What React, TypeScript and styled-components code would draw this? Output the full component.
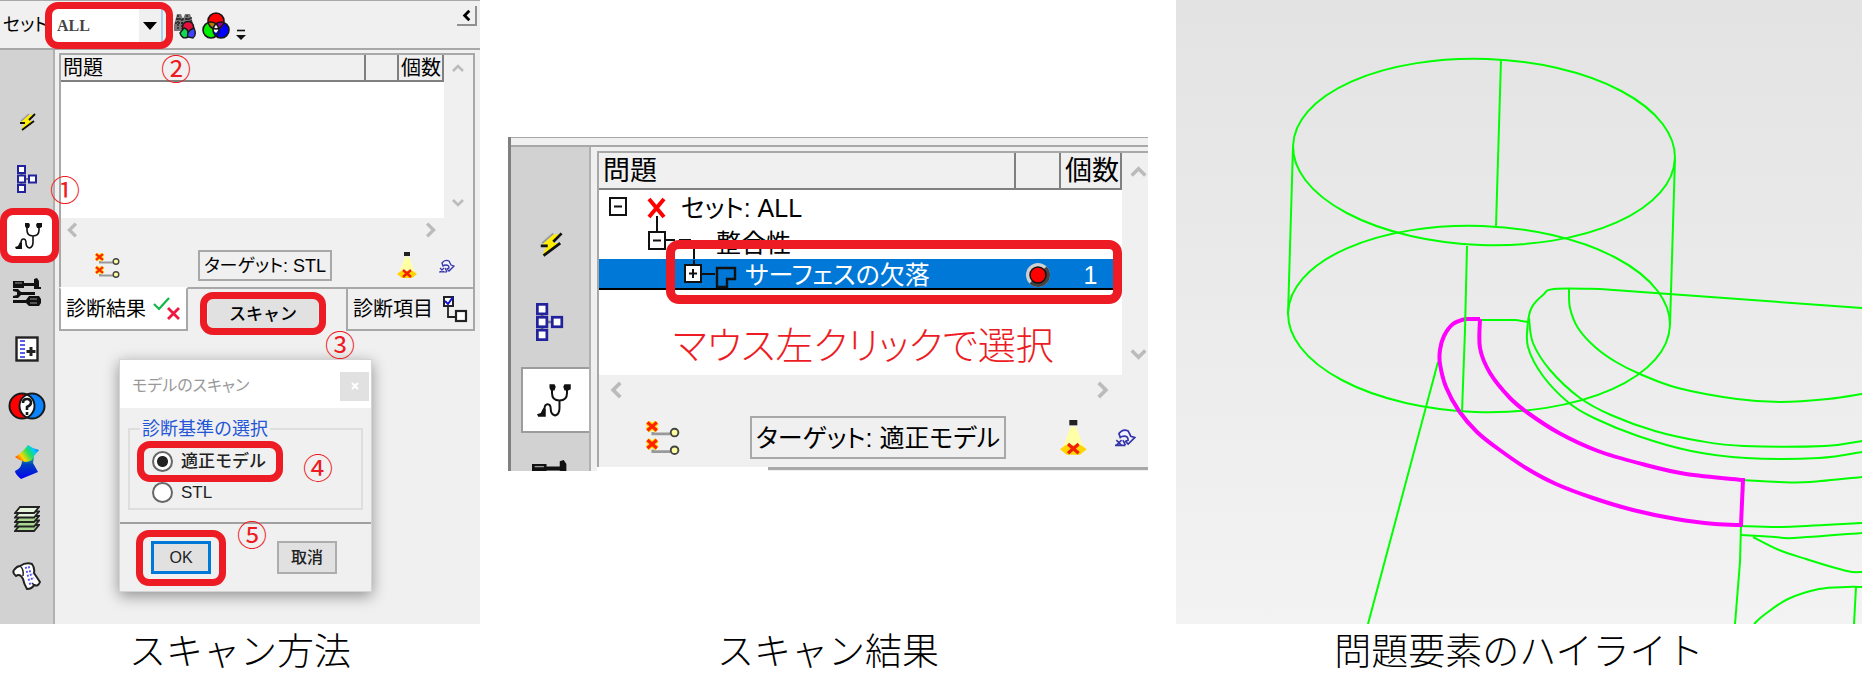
import React from "react";
import styled, { createGlobalStyle } from "styled-components";

const RED = "#ed1c24";
const FACE = "#f0f0f0";
const EDGE = "#a8a8a8";
const GREEN = "#00ff00";

const Global = createGlobalStyle`
  *, *::before, *::after { box-sizing: border-box; }
  body {
    margin: 0;
    background: #fff;
    color: #000;
    font-family: "Liberation Sans", "Noto Sans CJK JP", sans-serif;
    font-feature-settings: "palt";
  }
  button, select, input, table { font: inherit; color: inherit; font-feature-settings: inherit; }
`;

/* ---------- page ---------- */

const Page = styled.main`
  display: grid;
  grid-template-columns: 480fr 640fr 686fr;
  column-gap: 28px;
  padding-bottom: 24px;
`;

const Figure = styled.figure`
  margin: 0;
  min-width: 0;
  display: flex;
  flex-direction: column;
`;

const Stage = styled.div<{ $top?: number }>`
  min-height: 624px;
  padding-top: ${(p) => p.$top ?? 0}px;
  display: flex;
  flex-direction: column;
`;

const Caption = styled.figcaption`
  font: 300 37px/50px "Noto Sans CJK JP", sans-serif;
  text-align: center;
  white-space: nowrap;
`;

/* ---------- annotations ---------- */

const Mark = styled.span<{ $t: number; $r: number; $b: number; $l: number; $w?: number }>`
  position: absolute;
  inset: ${(p) => `${p.$t}px ${p.$r}px ${p.$b}px ${p.$l}px`};
  border: ${(p) => p.$w ?? 7}px solid ${RED};
  border-radius: 13px;
  pointer-events: none;
  z-index: 2;
`;

const Step = styled.span<{ $x: number; $y: number }>`
  position: absolute;
  left: ${(p) => p.$x}px;
  top: ${(p) => p.$y}px;
  width: 32px;
  color: ${RED};
  font: 400 30px/32px "Noto Sans CJK JP", sans-serif;
  text-align: center;
  z-index: 3;
`;

const Note = styled.p`
  margin: 0;
  padding: 25px 0 0 74px;
  color: ${RED};
  font: 300 38px/56px "Noto Sans CJK JP", sans-serif;
  font-feature-settings: "palt";
  white-space: nowrap;
`;

/* ---------- application window ---------- */

const Window = styled.section<{ $clip?: boolean }>`
  position: relative;
  flex: ${(p) => (p.$clip ? "none" : "1")};
  height: ${(p) => (p.$clip ? "334px" : "auto")};
  overflow: ${(p) => (p.$clip ? "hidden" : "visible")};
  border-left: ${(p) => (p.$clip ? "3px solid #808080" : "0")};
  display: flex;
  flex-direction: column;
  background: ${FACE};
`;

const Toolbar = styled.div<{ $h: number }>`
  flex: none;
  height: ${(p) => p.$h}px;
  display: flex;
  align-items: flex-start;
  padding: 0 3px;
  border-top: 1px solid ${EDGE};
  border-bottom: 2px solid ${EDGE};
`;

const SetLabel = styled.label`
  width: 48px;
  padding-top: 9px;
  font-size: 18px;
  line-height: 30px;
  white-space: nowrap;
`;

const SelectBox = styled.span`
  position: relative;
  width: 112px;
  margin-top: 8px;
  background: #fff;
  border-right: 2px solid #a9d3f2;
  svg { position: absolute; right: 0; top: 0; pointer-events: none; }
`;

const Select = styled.select`
  appearance: none;
  width: 100%;
  height: 34px;
  padding: 0 6px;
  border: 0;
  background: none;
  color: #444;
  font: 700 16px/34px "Liberation Serif", serif;
`;

const IconButton = styled.button<{ $m?: string }>`
  display: grid;
  place-items: center;
  margin: ${(p) => p.$m ?? "0"};
  padding: 0;
  border: 0;
  background: none;
`;

const Collapse = styled(IconButton)`
  width: 20px;
  height: 20px;
  margin: 5px 0 0 auto;
  border-right: 2px solid #909090;
  border-bottom: 2px solid #909090;
`;

const Body = styled.div`
  flex: 1;
  min-height: 0;
  display: flex;
`;

const Sidebar = styled.nav<{ $big?: boolean }>`
  flex: none;
  width: ${(p) => (p.$big ? 80 : 55)}px;
  padding: ${(p) => (p.$big ? "58px 0 0" : "44px 0 20px")};
  display: flex;
  flex-direction: column;
  background: #d2d2d2;
  border-right: 2px solid #b0b0b0;
`;

const SideItem = styled.button<{ $big?: boolean }>`
  position: relative;
  flex: ${(p) => (p.$big ? "none" : "1")};
  height: ${(p) => (p.$big ? "78px" : "auto")};
  padding: 0;
  border: 0;
  background: none;
  display: grid;
  place-items: center;
`;

const ActiveTab = styled.span<{ $big?: boolean }>`
  position: relative;
  display: grid;
  place-items: center;
  justify-self: end;
  width: ${(p) => (p.$big ? 68 : 46)}px;
  height: ${(p) => (p.$big ? 66 : 44)}px;
  padding-right: 3px;
  background: #fff;
  border: ${(p) => (p.$big ? "2px solid #9c9c9c" : "0")};
  border-right: 0;
`;

const Content = styled.div<{ $big?: boolean }>`
  flex: 1;
  min-width: 0;
  padding: ${(p) => (p.$big ? "4px 0 0 6px" : "3px 5px 0 4px")};
`;

const Panel = styled.div<{ $big?: boolean }>`
  border: 2px solid ${EDGE};
  border-bottom: 0;
  ${(p) => p.$big && "border-right: 0;"}
`;

const Scroller = styled.div<{ $bar: number }>`
  display: grid;
  grid-template-columns: 1fr ${(p) => p.$bar}px;
`;

const ListArea = styled.div<{ $h: number }>`
  height: ${(p) => p.$h}px;
  background: #fff;
`;

const VBar = styled.div<{ $big?: boolean }>`
  display: flex;
  flex-direction: column;
  justify-content: space-between;
  padding: ${(p) => (p.$big ? "9px 0 11px 6px" : "6px 2px 8px 0")};
`;

const HBar = styled.div<{ $big?: boolean }>`
  display: flex;
  justify-content: space-between;
  padding: ${(p) => (p.$big ? "5px 35px 3px 7px" : "3px 33px 3px 2px")};
`;

const Table = styled.table`
  width: 100%;
  border-collapse: collapse;
  table-layout: fixed;
`;

const Th = styled.th<{ $big?: boolean; $w?: number }>`
  width: ${(p) => (p.$w ? `${p.$w}px` : "auto")};
  height: ${(p) => (p.$big ? 36 : 26)}px;
  padding: 0 0 0 ${(p) => (p.$big ? 4 : 2)}px;
  background: ${FACE};
  border-right: 2px solid #808080;
  border-bottom: 2px solid #808080;
  font-size: ${(p) => (p.$big ? 27 : 20)}px;
  line-height: ${(p) => (p.$big ? 32 : 24)}px;
  font-weight: 400;
  text-align: left;
  white-space: nowrap;
`;

const Row = styled.tr<{ $h: number; $on?: boolean }>`
  position: relative;
  height: ${(p) => p.$h}px;
  background: ${(p) => (p.$on ? "#0078d7" : "none")};
  color: ${(p) => (p.$on ? "#fff" : "#000")};
  ${(p) => p.$on && "box-shadow: inset 0 -2px #000;"}
  td { padding: 0; text-align: center; font-size: 25px; line-height: 30px; }
  td svg { display: block; margin: auto; }
`;

const TreeCell = styled.span`
  display: flex;
  align-items: center;
  white-space: nowrap;
  && svg { flex: none; margin: 0; }
`;

const Actions = styled.div<{ $big?: boolean }>`
  height: ${(p) => (p.$big ? 64 : 45)}px;
  display: flex;
  align-items: center;
  padding: ${(p) => (p.$big ? "5px 12px 0 47px" : "2px 18px 0 34px")};
`;

const Target = styled.button<{ $big?: boolean }>`
  height: ${(p) => (p.$big ? 43 : 31)}px;
  width: ${(p) => (p.$big ? 256 : 134)}px;
  margin: ${(p) => (p.$big ? "0 auto 0 70px" : "0 auto 0 78px")};
  padding: 0;
  background: none;
  border: 2px solid ${EDGE};
  font-size: ${(p) => (p.$big ? 25 : 18)}px;
  line-height: 24px;
  white-space: nowrap;
`;

const Tabs = styled.div`
  display: grid;
  grid-template-columns: 129px 1fr 129px;
  height: 39px;
`;

const Tab = styled.button<{ $on?: boolean }>`
  display: flex;
  align-items: center;
  justify-content: space-between;
  padding: 0 5px;
  background: ${(p) => (p.$on ? "#fff" : FACE)};
  border: 2px solid ${EDGE};
  ${(p) => p.$on && "border-top-color: #fff;"}
  font-size: 20px;
  line-height: 28px;
  white-space: nowrap;
`;

const TabGap = styled.div`
  border-top: 2px solid ${EDGE};
  padding: 10px 28px 0 20px;
`;

const ScanButton = styled.button`
  position: relative;
  width: 100%;
  height: 32px;
  padding: 0;
  border: 0;
  background: #e1e1e1;
  font-size: 17px;
  line-height: 32px;
  font-weight: 500;
  font-feature-settings: normal;
`;

const CutTabsBack = styled.div`
  background: #fff;
`;

const CutTabs = styled.div`
  margin-left: 171px;
  height: 12px;
  border-top: 3px solid ${EDGE};
  background: ${FACE};
`;

/* ---------- scan dialog ---------- */

const Dialog = styled.section`
  position: absolute;
  left: 119px;
  top: 359px;
  width: 253px;
  background: ${FACE};
  border: 1px solid #d4d4d4;
  box-shadow: 0 4px 14px rgba(0, 0, 0, 0.4);
`;

const TitleBar = styled.header`
  height: 48px;
  display: flex;
  justify-content: space-between;
  align-items: center;
  padding: 0 2px 0 12px;
  background: #fff;
  color: #999;
  font-size: 16px;
`;

const Close = styled(IconButton)`
  width: 29px;
  height: 29px;
  margin-top: 4px;
  background: #e1e1e1;
`;

const Group = styled.fieldset`
  height: 92px;
  margin: 10px 8px 12px;
  padding: 6px 0 0 22px;
  border: 2px solid #dedede;
  legend {
    margin-left: -12px;
    padding: 0 2px;
    color: #2456d6;
    font-size: 18px;
    line-height: 22px;
    font-feature-settings: normal;
  }
`;

const Choice = styled.label`
  position: relative;
  display: flex;
  align-items: center;
  gap: 8px;
  width: max-content;
  height: 31px;
  font-size: 17px;
  line-height: 24px;
  font-weight: 500;
  color: #222;
  font-feature-settings: normal;
`;

const Radio = styled.input`
  appearance: none;
  width: 21px;
  height: 21px;
  margin: 0;
  border: 2px solid #666;
  border-radius: 50%;
  background: #fff;
  &:checked { background: radial-gradient(circle, #222 5px, #fff 6px); }
`;

const Buttons = styled.footer`
  height: 69px;
  display: flex;
  justify-content: space-between;
  padding: 17px 34px 0 31px;
  border-top: 2px solid #a0a0a0;
`;

const DialogButton = styled.button<{ $primary?: boolean }>`
  position: relative;
  width: 60px;
  height: 33px;
  padding: 0;
  background: #e1e1e1;
  border: ${(p) => (p.$primary ? "3px solid #0078d7" : "2px solid #adadad")};
  color: #222;
  font-size: 16px;
  font-weight: 500;
  line-height: 26px;
`;

const Drawing = styled.svg`
  display: block;
  width: 100%;
  height: 624px;
`;

/* ---------- icons ---------- */

type Sized = { s?: number };

const Chevron = ({ d, s = 14, c = "#bbb", w = 2.6 }: { d: "up" | "down" | "left" | "right"; s?: number; c?: string; w?: number }) => {
  const paths = { up: "M2 10L7 5L12 10", down: "M2 4L7 9L12 4", left: "M10 2L5 7L10 12", right: "M4 2L9 7L4 12" };
  return (
    <svg width={s} height={s} viewBox="0 0 14 14">
      <path d={paths[d]} fill="none" stroke={c} strokeWidth={w} />
    </svg>
  );
};

const Bolt = ({ s = 18 }: Sized) => (
  <svg width={s} height={s} viewBox="0 0 18 18">
    <path d="M11 2L3 9h4L3 17 16 8h-5l6-7z" fill="#ffee00" />
    <path d="M11 1L3 8" stroke="#999" strokeWidth="1.4" />
    <path d="M17 1L11 7M2 10h5M16 8L4 17" stroke="#111" strokeWidth="2" fill="none" />
  </svg>
);

const Nodes = ({ s = 28 }: Sized) => (
  <svg width={(s * 20) / 28} height={s} viewBox="0 0 20 28">
    <g fill="#fff" stroke="#22229c" strokeWidth="2">
      <path d="M4.500 8v12M8 14h4" stroke="#777" />
      <rect x="1" y="1" width="7" height="7" />
      <rect x="1" y="10.500" width="7" height="7" />
      <rect x="1" y="20" width="7" height="7" />
      <rect x="12" y="10.500" width="7" height="7" />
    </g>
  </svg>
);

const Stethoscope = ({ s = 28 }: Sized) => (
  <svg width={s} height={s} viewBox="0 0 28 28">
    <path d="M12 4v4q0 6 6 6t6-6V4M18 14v6q0 5-3.500 6Q11 25 11 21q0-4-2.500-4T6 21l-2 4" fill="none" stroke="#111" strokeWidth="1.600" />
    <path d="M10 1h4l1 2-1 3h-3L10 4zM22 1h5v4l-2 1h-3l-1-3zM5 20l2 1v6H1l-1-2 3-1z" fill="#111" />
  </svg>
);

const Tools = ({ s = 28 }: Sized) => (
  <svg width={s} height={s} viewBox="0 0 28 28">
    <path d="M0 3h11v2h10V1l3-1 2 3v6h2v2h-7V8H11v2H0z" fill="#111" />
    <path d="M2 5h7" stroke="#999" />
    <path d="M0 11h5l3 3h14v3H8l-3 3H0v-2l4-1v-3l-4-1z" fill="#111" />
    <path d="M0 22h13l3-4h10l2 3v4l-2 3H16l-3-3H0z" fill="#111" />
    <path d="M17 21h7M17 25h7" stroke="#999" />
  </svg>
);

const DocPlus = () => (
  <svg width="24" height="26" viewBox="0 0 24 26">
    <rect x="1.500" y="1.500" width="21" height="23" fill="#fff" stroke="#222" strokeWidth="2.400" />
    <path d="M5 5h5M5 9h5M5 13h5M5 17h5M5 21h5" stroke="#5a5aee" strokeWidth="2" />
    <path d="M16 11v9M11.500 15.500h9" stroke="#222" strokeWidth="3" />
  </svg>
);

const Venn = () => (
  <svg width="38" height="28" viewBox="0 0 38 28">
    <circle cx="14" cy="14" r="12.500" fill="#fe0000" />
    <circle cx="24" cy="14" r="12.500" fill="#0a84ff" />
    <path d="M19 2.700a12.500 12.500 0 0 1 0 22.600 12.500 12.500 0 0 1 0-22.600z" fill="#fff" />
    <g fill="none" stroke="#181818" strokeWidth="2">
      <circle cx="14" cy="14" r="12.500" />
      <circle cx="24" cy="14" r="12.500" />
      <path d="M15 11q0-4 4-4t4 4q0 2-4 4v3M19 20v3" strokeWidth="2.600" />
    </g>
  </svg>
);

const Ribbon = () => (
  <svg width="24" height="34" viewBox="0 0 24 34">
    <defs>
      <linearGradient id="rainbow" x1="0" y1="0.700" x2="1" y2="0.200">
        <stop offset="0" stopColor="#ff4a00" />
        <stop offset="0.250" stopColor="#ffd800" />
        <stop offset="0.550" stopColor="#22e060" />
        <stop offset="0.800" stopColor="#00c8ff" />
        <stop offset="1" stopColor="#0050ff" />
      </linearGradient>
      <linearGradient id="deep" x1="0" y1="0" x2="0" y2="1">
        <stop offset="0" stopColor="#20b080" />
        <stop offset="0.350" stopColor="#0040c0" />
        <stop offset="1" stopColor="#0000f0" />
      </linearGradient>
    </defs>
    <path d="M7 16l12-4-1 6 5 9-17 7q-6-5-6-8 7-3 7-10z" fill="url(#deep)" />
    <path d="M0 12Q7 8 13 0q5 4 11 5-4 4-7 10-3 2-7 2-5-1-10-5z" fill="url(#rainbow)" />
  </svg>
);

const Layers = () => (
  <svg width="26" height="28" viewBox="0 0 26 28">
    {[20, 15.5, 11, 6.5, 2].map((y, i) => (
      <path key={y} d={`M1 ${y + 6}L6 ${y}H25L20 ${y + 6}z`} fill={i > 2 ? "#e4f4da" : "#a8d890"} stroke="#222" strokeWidth="1.800" />
    ))}
  </svg>
);

const Scroll = () => (
  <svg width="30" height="28" viewBox="0 0 30 28">
    <path d="M8 4Q14 0 20 2q3 4 2 9l6 9q-2 5-6 3-2 4-7 4-3-5-4-10-3-6-7-3-4-3-2-6 3-4 6-4z" fill="#fff" stroke="#222" strokeWidth="2" />
    <path d="M8 4q4 3 3 10M22 23l-2-2" fill="none" stroke="#222" strokeWidth="1.500" />
    <path d="M13 6l5-1M14 10l5-1M15 14l6-2M16 18l6-2M17 22l3-1" stroke="#5c5cf2" strokeWidth="2" strokeDasharray="2 1" />
  </svg>
);

const Spheres = () => (
  <svg width="28" height="28" viewBox="0 0 28 28">
    <circle cx="14" cy="9" r="8" fill="#fe0000" />
    <circle cx="9" cy="18" r="8" fill="#00f000" />
    <circle cx="19" cy="18" r="8" fill="#0000ff" />
    <path d="M14 12q4 2 4 4l-4 5q-4-3-4-6z" fill="#fff" />
    <path d="M6.500 10.500Q10 9 14 12q-4 2-5 5-3-3-2.500-6.500z" fill="#c07a00" />
    <path d="M21.500 10.500Q18 9 14 12q4 2 5 5 3-3 2.500-6.500z" fill="#900090" />
    <g fill="none" stroke="#181818" strokeWidth="1.600">
      <circle cx="14" cy="9" r="8" />
      <circle cx="9" cy="18" r="8" />
      <circle cx="19" cy="18" r="8" />
    </g>
  </svg>
);

const Binoculars = () => (
  <svg width="22" height="26" viewBox="0 0 22 26">
    <path d="M0 12L3 1h4l2 5 2-5h5l3 9v8H0z" fill="#777" />
    <path d="M1 10h17M2 6h15M4 2v14M8 6v10M13 2v14M17 4v12" stroke="#222" strokeWidth="1.400" strokeDasharray="2 1" />
    <circle cx="14" cy="14" r="5.500" fill="#e0103a" stroke="#181818" strokeWidth="1.400" />
    <path d="M6 20l4-5q6 2 4 9-6 3-8-4z" fill="#10d850" stroke="#181818" strokeWidth="1.400" />
    <path d="M14 24q-2-6 6-9 3 7-1 10z" fill="#4040ff" stroke="#181818" strokeWidth="1.400" />
  </svg>
);

const More = () => (
  <svg width="10" height="12" viewBox="0 0 10 12">
    <path d="M1 1.500h8" stroke="#111" strokeWidth="1.600" />
    <path d="M0 6h10L5 11z" fill="#111" />
  </svg>
);

const BrokenLinks = ({ s = 25 }: Sized) => (
  <svg width={s} height={s} viewBox="0 0 25 25">
    {[0, 13].map((y) => (
      <g key={y}>
        <path d={`M5 ${y + 8}v1.500h13`} fill="none" stroke="#999" strokeWidth="2" />
        <path d={`M1 ${y + 1}l7 6M8 ${y + 1}l-7 6`} stroke="#ffd800" strokeWidth="4" />
        <path d={`M1 ${y + 1}l7 6M8 ${y + 1}l-7 6`} stroke="#ff2200" strokeWidth="2.300" />
        <circle cx="21" cy={y + 8.5} r="2.800" fill="#ffffa0" stroke="#444" strokeWidth="1.400" />
      </g>
    ))}
  </svg>
);

const Lamp = ({ s = 27 }: Sized) => (
  <svg width={(s * 20) / 27} height={s} viewBox="0 0 20 27">
    <rect x="7" y="0" width="6" height="4" fill="#222" />
    <path d="M8 5h4l6 16H2z" fill="#ffffa6" />
    <path d="M0 22l4-3h12l4 3-5 4H5z" fill="#ffd400" />
    <path d="M6 18l8 7M14 18l-8 7" stroke="#f02000" strokeWidth="2.400" />
  </svg>
);

const Turn = ({ s = 16 }: Sized) => (
  <svg width={s} height={s} viewBox="0 0 16 16">
    <path d="M3 5q3-4 7-2l2 4 3 1-5 5-2-2 2-1q0-3-3-3-2 0-3 1z" fill="#f4f4ff" stroke="#3434ac" strokeWidth="1.300" />
    <path d="M1 10l4 4M5 10l-4 4M6 10l2 4M0 14h8" stroke="#3434ac" strokeWidth="1.200" />
  </svg>
);

const CheckCross = () => (
  <svg width="28" height="26" viewBox="0 0 28 26">
    <path d="M1 8l5 5L16 2" fill="none" stroke="#10b848" strokeWidth="2.200" />
    <path d="M15 12l11 11M26 12L15 23" stroke="#ee1840" strokeWidth="2.800" />
  </svg>
);

const CheckTree = () => (
  <svg width="26" height="28" viewBox="0 0 26 28">
    <path d="M6 10v12h8" fill="none" stroke="#222" strokeWidth="1.800" />
    <rect x="2" y="2" width="9" height="9" fill="#fff" stroke="#222" strokeWidth="2" />
    <path d="M3 6l3 3 5-7" fill="none" stroke="#1010d0" strokeWidth="2" />
    <rect x="14" y="16" width="10" height="10" fill="#fff" stroke="#222" strokeWidth="2.200" />
  </svg>
);

const Led = () => (
  <svg width="26" height="26" viewBox="0 0 26 26">
    <circle cx="13" cy="13" r="12" fill="#d0d0d0" />
    <path d="M21.500 4.500a12 12 0 0 1-17 17z" fill="#444" />
    <circle cx="13" cy="13" r="8" fill="#fe0000" stroke="#111" strokeWidth="1.500" />
  </svg>
);

const RootGlyph = () => (
  <svg width="82" height="36" viewBox="0 0 82 36">
    <rect x="11" y="8" width="16" height="17" fill="#fff" stroke="#111" strokeWidth="2" />
    <path d="M15 16.500h8M58 26v10" stroke="#111" strokeWidth="2" />
    <path d="M50 9l15 18M65 9L50 27" stroke="#fe0000" strokeWidth="4" />
  </svg>
);

const BranchGlyph = () => (
  <svg width="117" height="33" viewBox="0 0 117 33">
    <path d="M58 0v6M67 14h9M80 14h12M95 20v13" stroke="#111" strokeWidth="2" />
    <rect x="50" y="6" width="16" height="17" fill="#fff" stroke="#111" strokeWidth="2" />
    <path d="M54 14.500h8" stroke="#111" strokeWidth="2" />
  </svg>
);

const LeafGlyph = () => (
  <svg width="146" height="30" viewBox="0 0 146 30">
    <path d="M95 0v6M103 14h13" stroke="#111" strokeWidth="2" />
    <rect x="86" y="5" width="16" height="17" fill="#fff" stroke="#111" strokeWidth="2" />
    <path d="M90 13.500h8M94 9v9" stroke="#111" strokeWidth="2" />
    <path d="M118 8h18v11h-8v8h-10z" fill="none" stroke="#111" strokeWidth="2.400" />
  </svg>
);

/* ---------- wireframe ---------- */

type Pt = [number, number];

/** Smooth path through the given points (Catmull-Rom to cubic segments). */
const smooth = (pts: Pt[]) =>
  pts.slice(1).reduce((d, p, k) => {
    const a = pts[Math.max(k - 1, 0)];
    const b = pts[k];
    const c = pts[Math.min(k + 2, pts.length - 1)];
    const c1 = [b[0] + (p[0] - a[0]) / 6, b[1] + (p[1] - a[1]) / 6];
    const c2 = [p[0] - (c[0] - b[0]) / 6, p[1] - (c[1] - b[1]) / 6];
    return `${d}C${c1.join(" ")} ${c2.join(" ")} ${p.join(" ")}`;
  }, `M${pts[0].join(" ")}`);

const edges: Pt[][] = [
  [[424, 289], [378, 289], [367, 295], [356, 307], [352, 322], [352, 347], [367, 376], [393, 403], [418, 418], [462, 436], [515, 451], [570, 458], [643, 458], [686, 452]],
  [[353, 318], [357, 343], [374, 370], [404, 398], [435, 415], [479, 431], [524, 441], [568, 446], [649, 446], [686, 441]],
  [[393, 289], [394, 308], [402, 328], [419, 347], [440, 362], [464, 374], [502, 388], [561, 399], [605, 402], [652, 399], [686, 394]],
  [[567, 480], [603, 482], [634, 482], [686, 477]],
  [[565, 526], [607, 527], [667, 524], [686, 523]],
  [[565, 535], [599, 537], [618, 538], [686, 533]],
  [[577, 537], [603, 550], [630, 559], [671, 571], [686, 572]],
  [[578, 624], [588, 615], [612, 599], [643, 589], [671, 587], [686, 587]],
];

const faceInner: Pt[] = [[304, 319], [304, 348], [314, 373], [334, 398], [352, 413], [383, 433], [422, 451], [466, 464], [510, 474], [567, 480]];
const faceOuter: Pt[] = [[565, 525], [539, 524], [500, 519], [457, 510], [417, 498], [380, 484], [350, 468], [321, 448], [301, 432], [283, 411], [270, 387], [264, 364], [264, 350], [268, 336], [277, 324], [289, 319]];

const Wireframe = () => (
  <Drawing viewBox="0 0 686 624" preserveAspectRatio="xMinYMin slice" role="img" aria-label="問題要素のハイライト">
    <defs>
      <linearGradient id="sky" x1="0" y1="0" x2="0" y2="1">
        <stop offset="0" stopColor="#e3e3e3" />
        <stop offset="1" stopColor="#f3f3f3" />
      </linearGradient>
    </defs>
    <rect width="686" height="624" fill="url(#sky)" />
    <g fill="none" stroke={GREEN} strokeWidth="2">
      <ellipse cx="308" cy="152" rx="191" ry="93" transform="rotate(2 308 152)" />
      <ellipse cx="303" cy="319" rx="191" ry="93" transform="rotate(2 303 319)" />
      <path d="M117 147L112 315M499 158L494 325M325 60L320 226" />
      <path d="M262 362L192 624M304 320H340L352 322M424 289L493 294L686 308" />
      <path d="M565 525L564 562L559 624M680 587L678 624" />
      {edges.map((e, i) => (
        <path key={i} d={smooth(e)} />
      ))}
    </g>
    <path d={`${smooth(faceInner)}L565 525${smooth(faceOuter).replace("M", "L")}L304 319`} fill="none" stroke="#ff00ff" strokeWidth="4" />
    <path d="M291 246L289 330L286 412" fill="none" stroke={GREEN} strokeWidth="2" />
  </Drawing>
);

/* ---------- pieces ---------- */

const ListHead = ({ big }: { big?: boolean }) => (
  <thead>
    <tr>
      <Th $big={big}>問題</Th>
      <Th $big={big} $w={big ? 45 : 33} aria-label="状態" />
      <Th $big={big} $w={big ? 61 : 45}>個数</Th>
    </tr>
  </thead>
);

const VScroll = ({ big }: { big?: boolean }) => (
  <VBar $big={big}>
    <IconButton aria-label="上へ"><Chevron d="up" s={big ? 19 : 14} /></IconButton>
    <IconButton aria-label="下へ"><Chevron d="down" s={big ? 19 : 14} /></IconButton>
  </VBar>
);

const HScroll = ({ big }: { big?: boolean }) => (
  <HBar $big={big}>
    <IconButton aria-label="左へ"><Chevron d="left" s={big ? 20 : 18} /></IconButton>
    <IconButton aria-label="右へ"><Chevron d="right" s={big ? 20 : 18} /></IconButton>
  </HBar>
);

const ActionRow = ({ big, target }: { big?: boolean; target: string }) => (
  <Actions $big={big}>
    <IconButton aria-label="切断"><BrokenLinks s={big ? 34 : 25} /></IconButton>
    <Target $big={big}>ターゲット: {target}</Target>
    <IconButton aria-label="表示" $m={big ? "0 28px 0 0" : "0 22px 0 0"}><Lamp s={big ? 36 : 27} /></IconButton>
    <IconButton aria-label="戻す"><Turn s={big ? 21 : 16} /></IconButton>
  </Actions>
);

const MethodWindow = () => (
  <Window>
    <Toolbar $h={50}>
      <SetLabel htmlFor="set">セット</SetLabel>
      <SelectBox>
        <Select id="set" defaultValue="ALL">
          <option>ALL</option>
        </Select>
        <svg width="22" height="34" viewBox="0 0 22 34">
          <rect width="22" height="34" fill={FACE} />
          <path d="M4 13h14l-7 8z" fill="#000" />
        </svg>
        <Mark $t={-7} $r={-12} $b={-6} $l={-6} />
      </SelectBox>
      <IconButton $m="12px 0 0 11px" aria-label="検索"><Binoculars /></IconButton>
      <IconButton $m="11px 0 0 6px" aria-label="色"><Spheres /></IconButton>
      <IconButton $m="28px 0 0 6px" aria-label="その他"><More /></IconButton>
      <Collapse aria-label="折りたたむ"><Chevron d="left" s={13} c="#000" w={3} /></Collapse>
    </Toolbar>
    <Body>
      <Sidebar>
        <SideItem aria-label="クイック"><Bolt /></SideItem>
        <SideItem aria-label="構成"><Nodes /></SideItem>
        <SideItem aria-label="診断">
          <ActiveTab>
            <Stethoscope />
            <Mark $t={-6} $r={-6} $b={-5} $l={-7} />
          </ActiveTab>
        </SideItem>
        <SideItem aria-label="修正"><Tools /></SideItem>
        <SideItem aria-label="追加"><DocPlus /></SideItem>
        <SideItem aria-label="比較"><Venn /></SideItem>
        <SideItem aria-label="解析"><Ribbon /></SideItem>
        <SideItem aria-label="レイヤー"><Layers /></SideItem>
        <SideItem aria-label="レポート"><Scroll /></SideItem>
      </Sidebar>
      <Content>
        <Panel>
          <Scroller $bar={29}>
            <ListArea $h={163}>
              <Table><ListHead /></Table>
            </ListArea>
            <VScroll />
          </Scroller>
          <HScroll />
          <ActionRow target="STL" />
        </Panel>
        <Tabs>
          <Tab $on>診断結果 <CheckCross /></Tab>
          <TabGap>
            <ScanButton>
              スキャン
              <Mark $t={-7} $r={-8} $b={-4} $l={-8} />
            </ScanButton>
          </TabGap>
          <Tab>診断項目 <CheckTree /></Tab>
        </Tabs>
      </Content>
    </Body>
    <Dialog>
      <TitleBar>
        モデルのスキャン
        <Close aria-label="閉じる">
          <svg width="8" height="8" viewBox="0 0 8 8"><path d="M1 1l6 6M7 1L1 7" stroke="#fff" strokeWidth="2" /></svg>
        </Close>
      </TitleBar>
      <Group>
        <legend>診断基準の選択</legend>
        <Choice>
          <Radio type="radio" name="standard" defaultChecked /> 適正モデル
          <Mark $t={-5} $r={-17} $b={-5} $l={-15} />
        </Choice>
        <Choice>
          <Radio type="radio" name="standard" /> STL
        </Choice>
      </Group>
      <Buttons>
        <DialogButton $primary>
          OK
          <Mark $t={-14} $r={-18} $b={-15} $l={-18} />
        </DialogButton>
        <DialogButton>取消</DialogButton>
      </Buttons>
    </Dialog>
    <Step $x={49} $y={172}>①</Step>
    <Step $x={160} $y={51}>②</Step>
    <Step $x={324} $y={327}>③</Step>
    <Step $x={302} $y={450}>④</Step>
    <Step $x={236} $y={517}>⑤</Step>
  </Window>
);

const ResultWindow = () => (
  <Window $clip>
    <Toolbar $h={10} />
    <Body>
      <Sidebar $big>
        <SideItem $big aria-label="クイック"><Bolt s={25} /></SideItem>
        <SideItem $big aria-label="構成"><Nodes s={38} /></SideItem>
        <SideItem $big aria-label="診断"><ActiveTab $big><Stethoscope s={35} /></ActiveTab></SideItem>
        <SideItem $big aria-label="修正"><Tools s={37} /></SideItem>
      </Sidebar>
      <Content $big>
        <Panel $big>
          <Scroller $bar={26}>
            <ListArea $h={222}>
              <Table>
                <ListHead big />
                <tbody>
                  <Row $h={36}>
                    <td><TreeCell><RootGlyph />セット: ALL</TreeCell></td>
                    <td />
                    <td />
                  </Row>
                  <Row $h={33}>
                    <td><TreeCell><BranchGlyph />整合性</TreeCell></td>
                    <td />
                    <td />
                  </Row>
                  <Row $h={31} $on>
                    <td><TreeCell><LeafGlyph />サーフェスの欠落</TreeCell></td>
                    <td><Led /></td>
                    <td>
                      1
                      <Mark $t={-19} $r={-1} $b={-14} $l={67} $w={9} />
                    </td>
                  </Row>
                </tbody>
              </Table>
              <Note>マウス左クリックで選択</Note>
            </ListArea>
            <VScroll big />
          </Scroller>
          <HScroll big />
          <ActionRow big target="適正モデル" />
        </Panel>
        <CutTabsBack><CutTabs /></CutTabsBack>
      </Content>
    </Body>
  </Window>
);

export default function App() {
  return (
    <>
      <Global />
      <Page>
        <Figure>
          <Stage><MethodWindow /></Stage>
          <Caption>スキャン方法</Caption>
        </Figure>
        <Figure>
          <Stage $top={137}><ResultWindow /></Stage>
          <Caption>スキャン結果</Caption>
        </Figure>
        <Figure>
          <Stage><Wireframe /></Stage>
          <Caption>問題要素のハイライト</Caption>
        </Figure>
      </Page>
    </>
  );
}
